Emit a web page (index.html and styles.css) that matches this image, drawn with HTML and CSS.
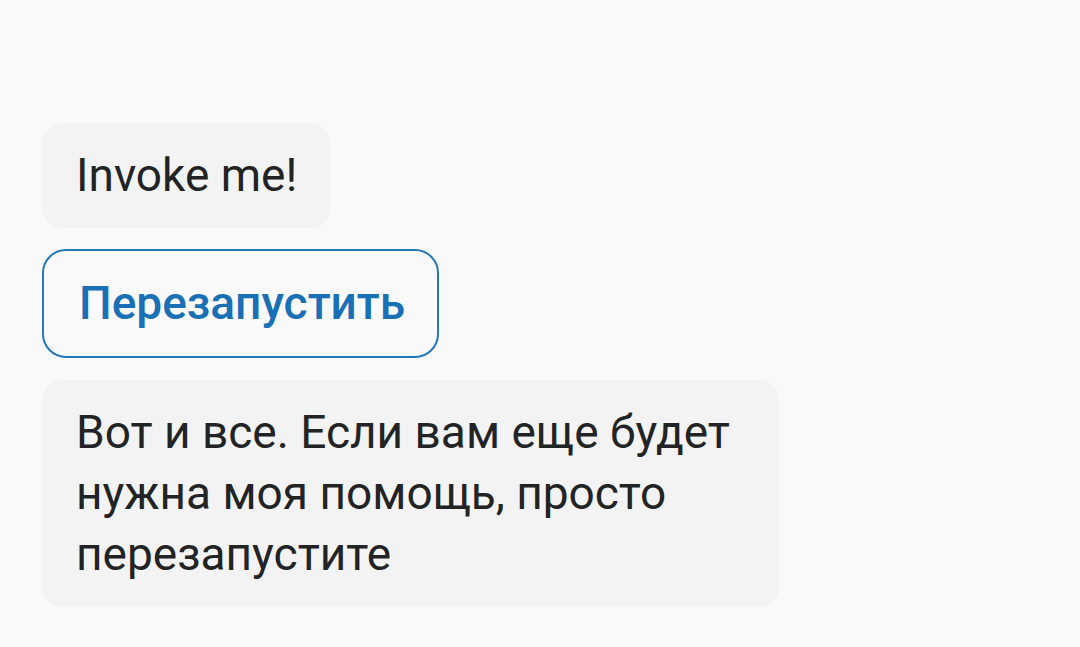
FILE: index.html
```html
<!DOCTYPE html>
<html lang="ru">
<head>
<meta charset="utf-8">
<title>Chat</title>
<link rel="stylesheet" href="styles.css">
</head>
<body>
<div class="chat">
  <div class="bubble">Invoke me!</div>
  <button class="action">Перезапустить</button>
  <div class="bubble">Вот и все. Если вам еще будет нужна моя помощь, просто перезапустите</div>
</div>
</body>
</html>
```

FILE: styles.css
```css
html, body {
  margin: 0;
  padding: 0;
  background: #f9f9f9;
}
body {
  font-family: Roboto, "Liberation Sans", sans-serif;
  color: #222324;
}
.chat {
  display: flex;
  flex-direction: column;
  align-items: flex-start;
  padding: 123px 0 0 42px;
}
.bubble {
  box-sizing: border-box;
  max-width: 737px;
  background: #f3f3f4;
  border-radius: 20px;
  padding: 22px 33px 22px 34px;
  font-size: 46px;
  line-height: 61px;
}
.action {
  box-sizing: border-box;
  margin: 21px 0 22px 0;
  height: 109px;
  padding: 0 32px 0 35px;
  background: transparent;
  border: 2px solid #2378b8;
  border-radius: 24px;
  color: #1a70b4;
  font-family: Roboto, "Liberation Sans", sans-serif;
  font-size: 46px;
  font-weight: 500;
  line-height: 61px;
}
```
